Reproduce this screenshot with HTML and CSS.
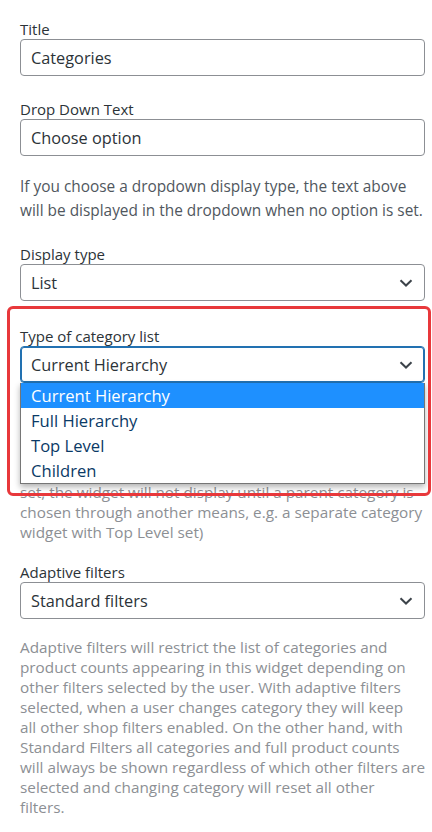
FILE: index.html
```html
<!DOCTYPE html>
<html lang="en">
<head>
<meta charset="utf-8">
<title>Widget settings</title>
<link rel="stylesheet" href="styles.css">
</head>
<body>
<div class="form">
  <div class="field">
    <label class="label">Title</label>
    <div class="input">Categories</div>
  </div>
  <div class="field">
    <label class="label">Drop Down Text</label>
    <div class="input">Choose option</div>
    <p class="desc desc-dark">If you choose a dropdown display type, the text above<br>will be displayed in the dropdown when no option is set.</p>
  </div>
  <div class="field field-display">
    <label class="label">Display type</label>
    <div class="select">List<svg class="chev" viewBox="0 0 14 8" width="14" height="8"><path d="M1.5 1.2 7 6.5 12.5 1.2" fill="none" stroke="#3c434a" stroke-width="2"/></svg></div>
  </div>
  <div class="field field-type">
    <label class="label">Type of category list</label>
    <div class="select-wrap">
      <div class="select select-focus">Current Hierarchy<svg class="chev" viewBox="0 0 14 8" width="14" height="8"><path d="M1.5 1.2 7 6.5 12.5 1.2" fill="none" stroke="#3c434a" stroke-width="2"/></svg></div>
      <ul class="menu">
        <li class="opt opt-active">Current Hierarchy</li>
        <li class="opt">Full Hierarchy</li>
        <li class="opt">Top Level</li>
        <li class="opt">Children</li>
      </ul>
    </div>
    <p class="desc desc-light">Choose which categories the widget lists: Current<br>Hierarchy shows the active branch, Full Hierarchy<br>shows every category, Top Level shows only parents<br>and Children shows sub categories. If no category is<br>set, the widget will not display until a parent category is<br>chosen through another means, e.g. a separate category<br>widget with Top Level set)</p>
    <div class="highlight"></div>
  </div>
  <div class="field">
    <label class="label">Adaptive filters</label>
    <div class="select">Standard filters<svg class="chev" viewBox="0 0 14 8" width="14" height="8"><path d="M1.5 1.2 7 6.5 12.5 1.2" fill="none" stroke="#3c434a" stroke-width="2"/></svg></div>
    <p class="desc desc-light desc-last">Adaptive filters will restrict the list of categories and<br>product counts appearing in this widget depending on<br>other filters selected by the user. With adaptive filters<br>selected, when a user changes category they will keep<br>all other shop filters enabled. On the other hand, with<br>Standard Filters all categories and full product counts<br>will always be shown regardless of which other filters are<br>selected and changing category will reset all other<br>filters.</p>
  </div>
</div>
</body>
</html>
```

FILE: styles.css
```css
html, body {
  margin: 0;
  padding: 0;
  background: #ffffff;
}
body {
  font-family: "Open Sans", "Noto Sans", sans-serif;
  color: #1d2327;
  width: 432px;
}
.form {
  padding: 19px 7px 0 20px;
  display: flex;
  flex-direction: column;
}
.field {
  position: relative;
  display: flex;
  flex-direction: column;
  margin-bottom: 23px;
}
.field-display {
  margin-bottom: 25px;
}
.field-type {
  margin-bottom: 20px;
}
.label {
  font-size: 15px;
  line-height: 20px;
  height: 20px;
  color: #2c3338;
}
.input, .select {
  box-sizing: border-box;
  height: 37px;
  border: 1px solid #8c8f94;
  border-radius: 4px;
  padding: 2px 10px 0;
  font-size: 16.3px;
  line-height: 33px;
  color: #2c3338;
  display: flex;
  align-items: center;
  justify-content: space-between;
}
.select .chev {
  margin-right: 1px;
  margin-top: -2px;
}
.select-wrap {
  position: relative;
}
.select-focus {
  border-color: #2271b1;
  box-shadow: 0 0 0 1px #2271b1 inset;
}
.menu {
  position: absolute;
  left: 0;
  top: 37px;
  width: 405px;
  box-sizing: border-box;
  margin: 0;
  padding: 0;
  list-style: none;
  background: #ffffff;
  border: 1px solid #767676;
  border-top: 0;
  box-shadow: 0 3px 6px rgba(0, 0, 0, 0.3);
  z-index: 2;
}
.opt {
  height: 25px;
  line-height: 26px;
  padding-left: 10px;
  font-size: 16.6px;
  color: #0a3a66;
}
.opt-active {
  background: #1e90ff;
  color: #ffffff;
}
.desc {
  margin: 19px 0 0;
  font-size: 15.3px;
  line-height: 20px;
  white-space: nowrap;
}
.desc-dark {
  color: #50575e;
  font-size: 15.4px;
  line-height: 24px;
  margin-top: 19px;
  margin-bottom: -2px;
}
.desc-light {
  color: #8c8f94;
}
.desc-last {
  margin-top: 18px;
}
.highlight {
  position: absolute;
  left: -13px;
  top: -20px;
  width: 424px;
  height: 190px;
  box-sizing: border-box;
  border: 3px solid #e8383b;
  border-radius: 6px;
  z-index: 3;
  pointer-events: none;
}
```
